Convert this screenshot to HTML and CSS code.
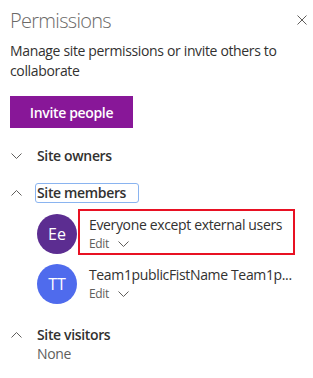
FILE: index.html
```html
<!DOCTYPE html>
<html lang="en">
<head>
    <meta charset="UTF-8">
    <meta name="viewport" content="width=device-width, initial-scale=1.0">
    <title>Permissions</title>
    <link rel="stylesheet" href="styles.css">
</head>
<body>
    <div class="panel">
        <div class="panel-header">
            <h1 class="panel-title">Permissions</h1>
            <button class="close-btn" aria-label="Close">
                <svg width="10" height="10" viewBox="0 0 10 10"><path d="M0.5 0.5 L9.5 9.5 M9.5 0.5 L0.5 9.5" stroke="#605e5c" stroke-width="1" fill="none"/></svg>
            </button>
        </div>

        <p class="panel-desc">Manage site permissions or invite others to collaborate</p>

        <button class="invite-btn">Invite people</button>

        <div class="group group-owners">
            <div class="group-head">
                <span class="chev">
                    <svg width="11" height="6" viewBox="0 0 11 6"><path d="M0.5 0.5 L5.5 5.5 L10.5 0.5" stroke="#605e5c" stroke-width="1" fill="none"/></svg>
                </span>
                <span class="group-title">Site owners</span>
            </div>
        </div>

        <div class="group group-members">
            <div class="group-head">
                <span class="chev">
                    <svg width="11" height="6" viewBox="0 0 11 6"><path d="M0.5 5.5 L5.5 0.5 L10.5 5.5" stroke="#605e5c" stroke-width="1" fill="none"/></svg>
                </span>
                <span class="group-title focused">Site members</span>
            </div>

            <div class="member">
                <div class="avatar avatar-purple">Ee</div>
                <div class="member-info highlighted">
                    <div class="member-name">Everyone except external users</div>
                    <div class="member-role">Edit
                        <svg width="11" height="6" viewBox="0 0 11 6"><path d="M0.5 0.5 L5.5 5.5 L10.5 0.5" stroke="#605e5c" stroke-width="1" fill="none"/></svg>
                    </div>
                </div>
            </div>

            <div class="member">
                <div class="avatar avatar-blue">TT</div>
                <div class="member-info">
                    <div class="member-name">Team1publicFistName Team1p...</div>
                    <div class="member-role">Edit
                        <svg width="11" height="6" viewBox="0 0 11 6"><path d="M0.5 0.5 L5.5 5.5 L10.5 0.5" stroke="#605e5c" stroke-width="1" fill="none"/></svg>
                    </div>
                </div>
            </div>
        </div>

        <div class="group group-visitors">
            <div class="group-head">
                <span class="chev">
                    <svg width="11" height="6" viewBox="0 0 11 6"><path d="M0.5 5.5 L5.5 0.5 L10.5 5.5" stroke="#605e5c" stroke-width="1" fill="none"/></svg>
                </span>
                <span class="group-title">Site visitors</span>
            </div>
            <div class="group-empty">None</div>
        </div>
    </div>
</body>
</html>
```

FILE: styles.css
```css
body {
    margin: 0;
    background-color: white;
    font-family: 'Open Sans', 'Noto Sans', sans-serif;
    color: #323130;
    letter-spacing: -0.35px;
}

.panel {
    width: 313px;
    padding: 0 10px;
    box-sizing: border-box;
}

.panel-header {
    display: flex;
    align-items: center;
    justify-content: space-between;
    height: 38px;
    padding-top: 1px;
}

.panel-title {
    margin: 0;
    font-size: 20px;
    font-weight: 300;
    letter-spacing: -0.7px;
    color: #6b6967;
}

.close-btn {
    border: none;
    background: none;
    padding: 0;
    margin-right: -4px;
    display: flex;
}

.panel-desc {
    margin: 0;
    padding-top: 2px;
    font-size: 14px;
    line-height: 20px;
    color: #323130;
}

.invite-btn {
    margin-top: 15px;
    width: 123px;
    height: 32px;
    border: none;
    background-color: #881798;
    color: white;
    font-family: inherit;
    font-size: 14px;
    font-weight: 600;
    letter-spacing: -0.35px;
    display: block;
}

.group-owners {
    margin-top: 17px;
}

.group-members {
    margin-top: 15px;
}

.group-visitors {
    margin-top: 19px;
}

.group-head {
    display: flex;
    align-items: center;
    height: 22px;
}

.chev {
    width: 26px;
    display: flex;
    align-items: center;
    padding-left: 1px;
}

.group-title {
    font-size: 14px;
    font-weight: 600;
    color: #323130;
    line-height: 20px;
}

.group-title.focused {
    outline: 1.5px solid #8ab4f0;
    border-radius: 2px;
    margin-left: -1px;
    padding: 0 12px 0 1px;
    line-height: 18px;
}

.member {
    display: flex;
    align-items: flex-start;
    margin-left: 27px;
    margin-top: 5px;
}

.member + .member {
    margin-top: 4px;
}

.avatar {
    width: 40px;
    height: 40px;
    margin-top: 5px;
    border-radius: 50%;
    display: flex;
    align-items: center;
    justify-content: center;
    color: white;
    font-size: 16px;
    letter-spacing: 0;
    flex-shrink: 0;
}

.avatar-purple {
    background-color: #5c2d91;
}

.avatar-blue {
    background-color: #4f6bed;
}

.member-info {
    margin-left: 1px;
    padding: 4px 4px 0 9px;
    border: 2px solid transparent;
    box-sizing: border-box;
    width: 217px;
    min-width: 0;
}

.member-info.highlighted {
    border-color: #e81123;
}

.member-name {
    font-size: 14px;
    line-height: 20px;
    color: #323130;
    white-space: nowrap;
}

.member-role {
    font-size: 12px;
    line-height: 18px;
    color: #605e5c;
    display: flex;
    align-items: center;
    gap: 9px;
}

.group-empty {
    margin-left: 27px;
    margin-top: -2px;
    font-size: 14px;
    line-height: 20px;
    color: #605e5c;
}
```
